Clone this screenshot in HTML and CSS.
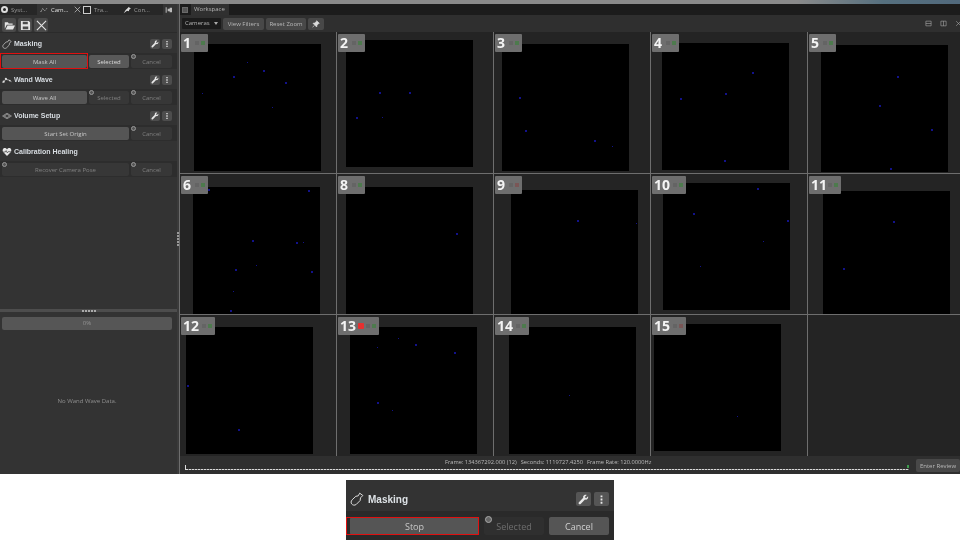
FILE: index.html
```html
<!DOCTYPE html>
<html lang="en">
<head>
  <meta charset="UTF-8">
  <title>Calibration</title>
  <link rel="stylesheet" href="styles.css">
</head>
<body>
  <svg class="defs" width="0" height="0">
    <symbol id="i-wrench" viewBox="0 0 12 12"><path d="M11 2.500 8.800 4.600 7.400 3.200 9.500 1C8 .4 6.200 1 5.700 2.500c-.2.600-.2 1.200 0 1.700L1 8.900c-.5.500-.5 1.400 0 1.900s1.400.5 1.900 0l4.700-4.700c1.900.6 4-.8 3.400-3.600z" fill="currentColor"/></symbol>
    <symbol id="i-dots" viewBox="0 0 12 12"><path d="M5 1.500h2v2H5zM5 5h2v2H5zM5 8.500h2v2H5z" fill="currentColor"/></symbol>
    <symbol id="i-brush" viewBox="0 0 18 18"><path d="M12.500 1.500 16.500 4.500 13.500 7.500 13 11 8 16c-2 1.500-4.500 1-5.700-.5S1 12 2.800 10L7.500 5.500 10.500 5z" fill="none" stroke="currentColor" stroke-width="1.200" stroke-linejoin="round"/></symbol>
  </svg>

  <div class="app">
    <div class="topstrip"></div>
    <div class="main">
      <aside class="side">
        <div class="tabs">
          <div class="tab t1"><span class="tab-ico gear"></span><span>Syst...</span></div>
          <div class="tab t2 active">
            <svg class="tab-svg" viewBox="0 0 12 12"><path d="M1 9 4 4l3 3 4-4" fill="none" stroke="#ddd" stroke-width="1.200" stroke-dasharray="1.500 1"/></svg>
            <span>Cam...</span>
            <svg class="tab-x" viewBox="0 0 10 10"><path d="M1 1l8 8M9 1 1 9" stroke="#ccc" stroke-width="1"/></svg>
          </div>
          <div class="tab t3"><span class="tab-ico box"></span><span>Tra...</span></div>
          <div class="tab t4"><svg class="tab-svg" viewBox="0 0 12 12"><path d="M1 11 4 6l2-2 3-3 1 2 2 0-3 3 0 2-3-1z" fill="#ddd"/></svg><span>Con...</span></div>
          <div class="tab pin"><svg class="tab-svg" viewBox="0 0 12 12"><path d="M1 2h1.500v8H1zM4 4h3V2.500h3.500v7H7V8H4z" fill="#bbb"/></svg></div>
        </div>

        <div class="toolbar">
          <button class="tool"><svg viewBox="0 0 14 12"><path d="M1 10V2h4l1 1.500h5V5H3.500L1 10zm1 1 2.500-5H14l-2.500 5z" fill="#e4e4e4"/></svg></button>
          <button class="tool"><svg viewBox="0 0 12 12"><path d="M1 1h8.500L11 2.500V11H1zm2 1v2.500h5.500V2zm0 5v3h6V7z" fill="#e4e4e4"/></svg></button>
          <button class="tool"><svg viewBox="0 0 12 12"><path d="M1 1l10 10M11 1 1 11" stroke="#e4e4e4" stroke-width="1.200"/></svg></button>
        </div>

        <section class="step">
          <header class="step-head">
            <svg class="step-ico" viewBox="0 0 18 18"><use href="#i-brush"/></svg>
            <h2>Masking</h2>
            <button class="mini"><svg viewBox="0 0 12 12"><use href="#i-wrench"/></svg></button>
            <button class="mini"><svg viewBox="0 0 12 12"><use href="#i-dots"/></svg></button>
          </header>
          <div class="step-btns">
            <button class="btn wide-a on alert">Mask All</button>
            <button class="btn wide-b on lit">Selected</button>
            <button class="btn wide-c"><i class="info"></i>Cancel</button>
          </div>
        </section>

        <section class="step">
          <header class="step-head">
            <svg class="step-ico" viewBox="0 0 18 18"><path d="M1 14 7 8l5 1 5 3" fill="none" stroke="#ddd" stroke-width="1.300"/><circle cx="7" cy="7" r="2" fill="#ddd"/><circle cx="3" cy="12" r="2" fill="#ddd"/><circle cx="14" cy="10" r="1.500" fill="#ddd"/></svg>
            <h2>Wand Wave</h2>
            <button class="mini"><svg viewBox="0 0 12 12"><use href="#i-wrench"/></svg></button>
            <button class="mini"><svg viewBox="0 0 12 12"><use href="#i-dots"/></svg></button>
          </header>
          <div class="step-btns">
            <button class="btn wide-a on">Wave All</button>
            <button class="btn wide-b"><i class="info"></i>Selected</button>
            <button class="btn wide-c"><i class="info"></i>Cancel</button>
          </div>
        </section>

        <section class="step">
          <header class="step-head">
            <svg class="step-ico" viewBox="0 0 18 18"><path d="M1 9l8-5 8 5-8 5zM4 9l5-3 5 3-5 3z" fill="none" stroke="#ccc" stroke-width="1"/></svg>
            <h2>Volume Setup</h2>
            <button class="mini"><svg viewBox="0 0 12 12"><use href="#i-wrench"/></svg></button>
            <button class="mini"><svg viewBox="0 0 12 12"><use href="#i-dots"/></svg></button>
          </header>
          <div class="step-btns">
            <button class="btn wide-ab on">Start Set Origin</button>
            <button class="btn wide-c"><i class="info"></i>Cancel</button>
          </div>
        </section>

        <section class="step">
          <header class="step-head">
            <svg class="step-ico" viewBox="0 0 18 18"><path d="M9 16 2 9C0 6 2 2 5 2c2 0 3 1 4 2.500C10 3 11 2 13 2c3 0 5 4 3 7z" fill="#e6e6e6"/><path d="M2 9h4l1.500-2.500 2 4L11 8.500h5" fill="none" stroke="#333" stroke-width="1.200"/></svg>
            <h2>Calibration Healing</h2>
          </header>
          <div class="step-btns">
            <button class="btn wide-ab"><i class="info"></i>Recover Camera Pose</button>
            <button class="btn wide-c"><i class="info"></i>Cancel</button>
          </div>
        </section>

        <div class="side-fill"></div>
        <div class="splitter"><span></span><span></span><span></span><span></span><span></span></div>
        <div class="side-low">
          <div class="progress">0%</div>
          <p class="nodata">No Wand Wave Data.</p>
        </div>
      </aside>

      <div class="vsplit"><span></span><span></span><span></span><span></span><span></span></div>

      <main class="work">
        <div class="work-tabs">
          <span class="doc-ico"></span>
          <span class="work-tab">Workspace</span>
        </div>
        <div class="work-bar">
          <div class="select">Cameras<i></i></div>
          <button class="bar-btn b-view">View Filters</button>
          <button class="bar-btn b-zoom">Reset Zoom</button>
          <button class="bar-btn pinb"><svg viewBox="0 0 12 12"><path d="M7 1l4 4-1.500.5L7.500 8 7 10.500 1.500 5 4 4.500 6.500 2.500zM3.500 8 1 11" fill="#ddd" stroke="#ddd"/></svg></button>
          <div class="bar-right">
            <svg viewBox="0 0 12 12"><path d="M1.500 2h9v8h-9zM1.500 6h9" fill="none" stroke="#aaa"/></svg>
            <svg viewBox="0 0 12 12"><path d="M1.500 2h9v8h-9zM6 2v8" fill="none" stroke="#aaa"/></svg>
            <svg viewBox="0 0 12 12"><path d="M2 2l8 8M10 2l-8 8" stroke="#aaa"/></svg>
          </div>
        </div>

        <div class="grid">
          <div class="cam c1"><div class="tag">1<b></b></div><svg class="feed" viewBox="0 0 127 127"><path d="M69 26h2v2h-2zM39 32h2v2h-2zM91 38h2v2h-2zM8 49h1v1H8zM78 63h1v1h-1zM53 18h1v1h-1z"/></svg></div>
          <div class="cam c2"><div class="tag">2<b></b></div><svg class="feed" viewBox="0 0 127 127"><path d="M33 52h2v2h-2zM63 52h2v2h-2zM10 77h2v2h-2zM36 77h1v1h-1z"/></svg></div>
          <div class="cam c3"><div class="tag">3<b></b></div><svg class="feed" viewBox="0 0 127 127"><path d="M17 53h2v2h-2zM23 86h2v2h-2zM92 96h2v2h-2zM110 102h1v1h-1z"/></svg></div>
          <div class="cam c4"><div class="tag">4<b></b></div><svg class="feed" viewBox="0 0 127 127"><path d="M18 55h2v2h-2zM63 50h2v2h-2zM90 29h2v2h-2zM62 117h2v2h-2z"/></svg></div>
          <div class="cam c5"><div class="tag">5<b></b></div><svg class="feed" viewBox="0 0 127 127"><path d="M76 31h2v2h-2zM58 60h2v2h-2zM110 84h2v2h-2zM69 123h2v2h-2z"/></svg></div>

          <div class="cam c6"><div class="tag">6<b></b></div><svg class="feed" viewBox="0 0 127 127"><path d="M15 2h2v2h-2zM115 3h2v2h-2zM59 53h2v2h-2zM103 55h2v2h-2zM110 55h1v1h-1zM42 82h2v2h-2zM63 78h1v1h-1zM118 84h2v2h-2zM40 104h1v1h-1zM37 123h2v2h-2z"/></svg></div>
          <div class="cam c8"><div class="tag">8<b></b></div><svg class="feed" viewBox="0 0 127 127"><path d="M110 46h2v2h-2z"/></svg></div>
          <div class="cam c9"><div class="tag red">9<b></b></div><svg class="feed" viewBox="0 0 127 127"><path d="M66 30h2v2h-2zM125 33h1v1h-1z"/></svg></div>
          <div class="cam c10"><div class="tag">10<b></b></div><svg class="feed" viewBox="0 0 127 127"><path d="M94 5h2v2h-2zM30 30h2v2h-2zM124 37h2v2h-2zM100 58h1v1h-1zM37 83h1v1h-1z"/></svg></div>
          <div class="cam c11"><div class="tag">11<b></b></div><svg class="feed" viewBox="0 0 127 127"><path d="M70 30h2v2h-2zM20 77h2v2h-2z"/></svg></div>

          <div class="cam c12"><div class="tag">12<b></b></div><svg class="feed" viewBox="0 0 127 127"><path d="M1 58h2v2H1zM52 102h2v2h-2z"/></svg></div>
          <div class="cam c13"><div class="tag">13<em></em><b></b></div><svg class="feed" viewBox="0 0 127 127"><path d="M65 17h2v2h-2zM27 20h1v1h-1zM104 25h2v2h-2zM48 11h1v1h-1zM27 75h2v2h-2zM42 83h1v1h-1z"/></svg></div>
          <div class="cam c14"><div class="tag">14<b></b></div><svg class="feed" viewBox="0 0 127 127"><path d="M60 68h1v1h-1z"/></svg></div>
          <div class="cam c15"><div class="tag red">15<b></b></div><svg class="feed" viewBox="0 0 127 127"><path d="M83 92h1v1h-1z"/></svg></div>
          <div class="cam empty"></div>
        </div>

        <div class="timeline">
          <div class="readout">
            <span>Frame: 134367292.000 (12)</span>
            <span>Seconds: 1119727.4250</span>
            <span>Frame Rate: 120.0000Hz</span>
          </div>
          <div class="track"></div>
          <button class="bar-btn review">Enter Review</button>
        </div>
      </main>
    </div>
  </div>

  <div class="inset-wrap">
    <section class="inset">
      <header class="inset-head">
        <svg class="inset-ico" viewBox="0 0 18 18"><use href="#i-brush"/></svg>
        <h2>Masking</h2>
        <button class="mini big"><svg viewBox="0 0 12 12"><use href="#i-wrench"/></svg></button>
        <button class="mini big"><svg viewBox="0 0 12 12"><use href="#i-dots"/></svg></button>
      </header>
      <div class="inset-btns">
        <button class="ibtn stop">Stop</button>
        <button class="ibtn off"><i class="info big"></i>Selected</button>
        <button class="ibtn cancel">Cancel</button>
      </div>
    </section>
  </div>
</body>
</html>
```

FILE: styles.css
```css
* { box-sizing: border-box; }
html, body { margin: 0; height: 540px; overflow: hidden; background: #fff; }
body { font-family: "Open Sans", "Liberation Sans", sans-serif; }
button { font-family: inherit; padding: 0; border: 0; }
.defs { display: block; height: 0; }

/* the capture is a little soft */
.app, .inset { filter: blur(.35px); }

.app { height: 474px; display: flex; flex-direction: column; background: #333; }
.topstrip { height: 4px; background: linear-gradient(90deg, #8a8a8a 0, #8a8a8a 83%, #56707f 92%, #51697c 100%); }
.main { flex: 1; display: flex; min-height: 0; }

/* left panel */
.side { width: 177px; display: flex; flex-direction: column; background: #333; }
.tabs { height: 11px; display: flex; background: #272727; font-size: 6px; color: #999; }
.tab { display: flex; align-items: center; gap: 3px; padding-left: 1px; }
.t1 { width: 37px; }
.t2 { width: 43px; padding-left: 3px; background: #333; color: #e0e0e0; }
.t3 { width: 40px; padding-left: 3px; }
.t4 { width: 43px; padding-left: 3px; }
.tab.pin { width: 14px; padding-left: 2px; background: #333; }
.tab-svg { width: 8px; height: 8px; flex: none; }
.tab-x { width: 7px; height: 7px; margin-left: 3px; flex: none; }
.tab-ico { width: 7px; height: 7px; flex: none; }
.tab-ico.gear { border: 2px solid #ddd; border-radius: 50%; }
.tab-ico.box { width: 8px; height: 8px; border: 1px solid #ccc; background: #222; }

.toolbar { height: 18px; display: flex; gap: 2px; padding: 3px 0 0 2px; background: #333; border-bottom: 1px solid #2b2b2b; }
.tool { width: 14px; height: 14px; background: #4a4a4a; border-radius: 2px; display: flex; align-items: center; justify-content: center; }
.tool svg { width: 11px; height: 11px; }

.step { height: 36px; }
.step-head { height: 20px; display: flex; align-items: center; padding: 1px 5px 0 2px; background: #333; }
.step-ico { width: 10px; height: 10px; color: #ddd; flex: none; margin-right: 2px; overflow: visible; }
.step-head h2 { margin: 0; flex: 1; font-family: "Liberation Sans", sans-serif; font-size: 7px; font-weight: 700; color: #d8dde2; }
.mini { width: 10px; height: 10px; margin-left: 2px; background: #4d4d4d; color: #e8e8e8; border-radius: 2px; display: flex; align-items: center; justify-content: center; }
.mini svg { width: 8px; height: 8px; }

.step-btns { height: 16px; display: flex; gap: 2px; padding: 2px 5px 0 2px; background: #2d2d2d; }
.btn { position: relative; height: 13px; background: #373737; color: #808080; font-size: 6px; border-radius: 2px; }
.btn.on { background: #555; color: #c8c8c8; }
.btn.lit { background: #595959; color: #dcdcdc; }
.btn.alert::after { content: ""; position: absolute; left: -2px; right: -1px; top: -2px; bottom: -1px; border: 1px solid #e01010; }
.wide-a { width: 85px; }
.wide-b { width: 40px; }
.wide-c { width: 41px; }
.wide-ab { width: 127px; }
.info { position: absolute; left: 0; top: -1px; width: 5px; height: 5px; border-radius: 50%; border: 1px solid #999; background: #555; }

.side-fill { flex: 1; }
.splitter { height: 3px; display: flex; justify-content: center; gap: 1px; align-items: center; background: #4d4d4d; }
.splitter span { width: 2px; height: 2px; background: #aaa; }
.side-low { height: 162px; padding: 5px 5px 0 2px; display: flex; flex-direction: column; }
.progress { height: 13px; background: #565656; border-radius: 2px; color: #939393; font-size: 6px; line-height: 13px; text-align: center; }
.nodata { margin: 67px 0 0; font-size: 6px; color: #8f8f8f; text-align: center; }

.vsplit { width: 2px; background: #3a3a3a; display: flex; flex-direction: column; justify-content: center; gap: 1px; align-items: center; }
.vsplit span { width: 2px; height: 2px; background: #999; }

/* workspace */
.work { flex: 1; min-width: 0; display: flex; flex-direction: column; background: #1c1c1c; border-left: 1px solid #6e6e6e; }
.work-tabs { height: 11px; display: flex; align-items: center; background: #1c1c1c; padding-left: 2px; }
.doc-ico { width: 6px; height: 6px; margin: 0 3px 0 0; background: #555; border: 1px solid #6a6a6a; }
.work-tab { height: 11px; padding: 0 4px 0 3px; line-height: 11px; font-size: 6px; color: #b4b4b4; background: #303030; }
.work-bar { height: 17px; display: flex; align-items: center; gap: 2px; padding-left: 2px; background: #2f2f2f; }
.select { position: relative; width: 39px; height: 11px; padding-left: 3px; background: #1b1b1b; color: #b4b4b4; font-size: 6px; line-height: 11px; border-radius: 1px; }
.select i { position: absolute; right: 3px; top: 4px; border: 2.500px solid transparent; border-top: 3px solid #aaa; border-bottom: 0; }
.bar-btn { height: 12px; background: #484848; color: #b8b8b8; font-size: 6px; border-radius: 2px; }
.b-view { width: 41px; }
.b-zoom { width: 40px; }
.pinb { width: 16px; display: flex; align-items: center; justify-content: center; }
.pinb svg { width: 8px; height: 8px; }
.bar-right { margin-left: auto; display: flex; gap: 8px; margin-right: -2px; }
.bar-right svg { width: 7px; height: 7px; }

.grid { height: 424px; display: grid; grid-template-columns: 156px 156px 156px 156px 152px; grid-template-rows: 141px 140px 141px; background: #6e6e6e; gap: 1px; }
.cam { position: relative; background: #242424; overflow: hidden; }
.feed { position: absolute; width: 127px; height: 127px; background: #000; fill: #12128a; }
.tag { position: absolute; left: 1px; top: 2px; z-index: 1; width: 27px; height: 18px; display: flex; align-items: center; gap: 2px; padding-left: 2px; background: #6e6e6e; border-radius: 1px; color: #f4f4f4; font-size: 14px; font-weight: 700; line-height: 18px; }
.tag b { width: 4px; height: 4px; margin-left: auto; margin-right: 3px; background: #4d7a4d; box-shadow: -6px 0 0 #646464; }
.tag.red b { background: #7a5656; }
.tag em { width: 6px; height: 6px; background: #e63030; border-radius: 1px; }
.c1 .feed { left: 14px; top: 12px; }
.c2 .feed { left: 9px; top: 8px; }
.c3 .feed { left: 8px; top: 12px; }
.c4 .feed { left: 11px; top: 11px; }
.c5 .feed { left: 13px; top: 13px; }
.c6 .feed { left: 13px; top: 13px; }
.c8 .feed { left: 9px; top: 13px; }
.c9 .feed { left: 17px; top: 16px; }
.c10 .feed { left: 12px; top: 9px; }
.c11 .feed { left: 15px; top: 17px; }
.c12 .feed { left: 6px; top: 12px; }
.c13 .feed { left: 13px; top: 12px; }
.c14 .feed { left: 15px; top: 12px; }
.c15 .feed { left: 3px; top: 9px; }
.c10 .tag, .c12 .tag, .c14 .tag, .c15 .tag { width: 34px; }
.c11 .tag { width: 32px; }
.c13 .tag { width: 41px; }

.timeline { flex: 1; position: relative; background: #2f2f2f; }
.readout { height: 12px; display: flex; gap: 4px; padding: 2px 0 0 265px; font-size: 5.700px; color: #bbb; }
.track { position: absolute; left: 5px; bottom: 4px; width: 724px; height: 5px; border-left: 1px solid #ddd; }
.track::after { content: ""; position: absolute; left: 0; right: 0; bottom: 0; height: 1.500px; background: repeating-linear-gradient(90deg, #d8d8d8 0 2px, #707070 2px 3px); }
.track::before { content: ""; position: absolute; right: 0; top: 0; width: 2px; height: 3px; background: #3c9a4c; }
.review { position: absolute; right: 0; top: 3px; width: 44px; height: 13px; }

/* zoomed detail below */
.inset-wrap { height: 66px; display: flex; justify-content: center; padding-top: 6px; }
.inset { width: 268px; height: 60px; background: #333; }
.inset-head { height: 31px; display: flex; align-items: center; padding: 7px 5px 0 4px; }
.inset-ico { width: 14px; height: 14px; color: #e6e6e6; margin-right: 4px; flex: none; overflow: visible; }
.inset-head h2 { flex: 1; margin: 0; font-family: "Liberation Sans", sans-serif; font-size: 10px; font-weight: 700; color: #dde2e6; }
.mini.big { width: 15px; height: 14px; margin-left: 3px; background: #555; }
.mini.big svg { width: 11px; height: 11px; }
.inset-btns { height: 29px; display: flex; gap: 5px; padding: 6px 0 0 4px; background: #2a2a2a; }
.ibtn { position: relative; height: 18px; border-radius: 2px; font-size: 9px; }
.ibtn.stop { width: 129px; background: #555; color: #c8c8c8; }
.ibtn.stop::after { content: ""; position: absolute; left: -4px; right: 0; top: 0; bottom: 0; border: 1px solid #e01010; }
.ibtn.off { width: 60px; background: #2f2f2f; color: #6e6e6e; }
.ibtn.cancel { width: 60px; background: #555; color: #d0d0d0; }
.info.big { width: 7px; height: 7px; left: 1px; top: -1px; border-color: #aaa; background: #666; }
```
